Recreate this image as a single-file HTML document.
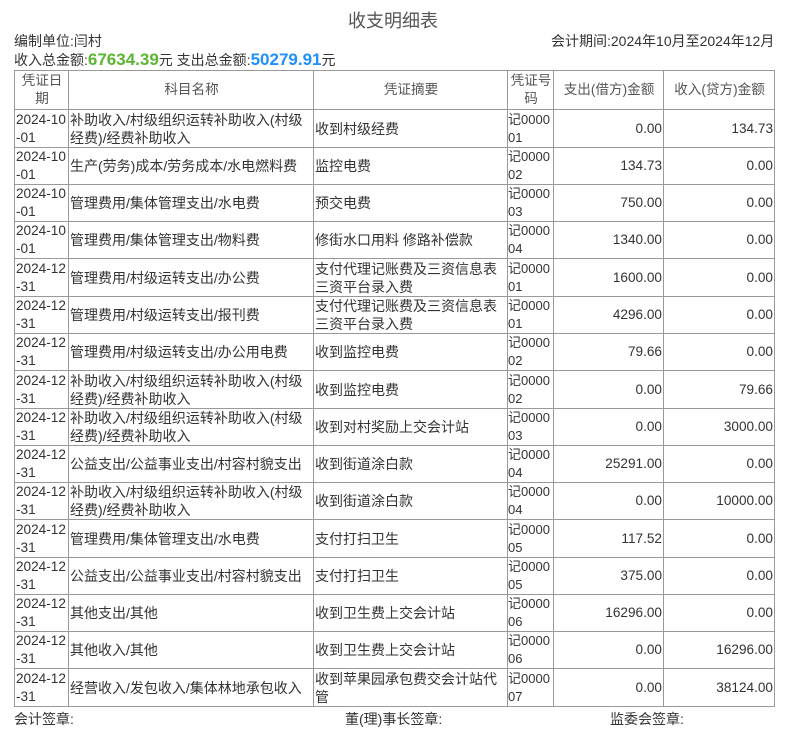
<!DOCTYPE html>
<html><head><meta charset="utf-8"><style>
body{margin:0;background:#fff;font-family:"Liberation Sans","Noto Sans CJK SC",sans-serif;color:#333;font-size:14px;}
.t{position:absolute;white-space:nowrap}
table{position:absolute;left:14px;top:70px;border-collapse:collapse;table-layout:fixed;width:761px;}
td,th{border:1px solid #999;padding:0 0 0 1px;font-weight:normal;line-height:18px;overflow:hidden;word-break:break-all;font-size:13.6px;color:#333}
th{text-align:center;color:#555}
td:nth-child(2),td:nth-child(3){font-size:14px}
td:nth-child(4){font-size:13px;padding:0}
td.r{text-align:right;padding-right:1px}
tr{height:37px}
tr.b{height:38px}
</style></head><body>
<div class="t" style="left:348px;top:7px;font-size:18px;color:#555">收支明细表</div>
<div class="t" style="left:14px;top:31px">编制单位:闫村</div>
<div class="t" style="left:551px;top:31px">会计期间:2024年10月至2024年12月</div>
<div class="t" style="left:14px;top:50px">收入总金额:<b style="color:#5cb531;font-size:17px">67634.39</b>元 支出总金额:<b style="color:#1e90ff;font-size:17px">50279.91</b>元</div>
<table>
<colgroup><col style="width:54px"><col style="width:245px"><col style="width:194px"><col style="width:46px"><col style="width:110px"><col style="width:111px"></colgroup>
<tr style="height:39px"><th>凭证日期</th><th>科目名称</th><th>凭证摘要</th><th>凭证号码</th><th>支出(借方)金额</th><th>收入(贷方)金额</th></tr>
<tr class="b"><td>2024-10-01</td><td>补助收入/村级组织运转补助收入(村级经费)/经费补助收入</td><td>收到村级经费</td><td>记000001</td><td class="r">0.00</td><td class="r">134.73</td></tr>
<tr><td>2024-10-01</td><td>生产(劳务)成本/劳务成本/水电燃料费</td><td>监控电费</td><td>记000002</td><td class="r">134.73</td><td class="r">0.00</td></tr>
<tr><td>2024-10-01</td><td>管理费用/集体管理支出/水电费</td><td>预交电费</td><td>记000003</td><td class="r">750.00</td><td class="r">0.00</td></tr>
<tr><td>2024-10-01</td><td>管理费用/集体管理支出/物料费</td><td>修街水口用料 修路补偿款</td><td>记000004</td><td class="r">1340.00</td><td class="r">0.00</td></tr>
<tr class="b"><td>2024-12-31</td><td>管理费用/村级运转支出/办公费</td><td>支付代理记账费及三资信息表三资平台录入费</td><td>记000001</td><td class="r">1600.00</td><td class="r">0.00</td></tr>
<tr><td>2024-12-31</td><td>管理费用/村级运转支出/报刊费</td><td>支付代理记账费及三资信息表三资平台录入费</td><td>记000001</td><td class="r">4296.00</td><td class="r">0.00</td></tr>
<tr><td>2024-12-31</td><td>管理费用/村级运转支出/办公用电费</td><td>收到监控电费</td><td>记000002</td><td class="r">79.66</td><td class="r">0.00</td></tr>
<tr class="b"><td>2024-12-31</td><td>补助收入/村级组织运转补助收入(村级经费)/经费补助收入</td><td>收到监控电费</td><td>记000002</td><td class="r">0.00</td><td class="r">79.66</td></tr>
<tr><td>2024-12-31</td><td>补助收入/村级组织运转补助收入(村级经费)/经费补助收入</td><td>收到对村奖励上交会计站</td><td>记000003</td><td class="r">0.00</td><td class="r">3000.00</td></tr>
<tr><td>2024-12-31</td><td>公益支出/公益事业支出/村容村貌支出</td><td>收到街道涂白款</td><td>记000004</td><td class="r">25291.00</td><td class="r">0.00</td></tr>
<tr><td>2024-12-31</td><td>补助收入/村级组织运转补助收入(村级经费)/经费补助收入</td><td>收到街道涂白款</td><td>记000004</td><td class="r">0.00</td><td class="r">10000.00</td></tr>
<tr class="b"><td>2024-12-31</td><td>管理费用/集体管理支出/水电费</td><td>支付打扫卫生</td><td>记000005</td><td class="r">117.52</td><td class="r">0.00</td></tr>
<tr><td>2024-12-31</td><td>公益支出/公益事业支出/村容村貌支出</td><td>支付打扫卫生</td><td>记000005</td><td class="r">375.00</td><td class="r">0.00</td></tr>
<tr><td>2024-12-31</td><td>其他支出/其他</td><td>收到卫生费上交会计站</td><td>记000006</td><td class="r">16296.00</td><td class="r">0.00</td></tr>
<tr><td>2024-12-31</td><td>其他收入/其他</td><td>收到卫生费上交会计站</td><td>记000006</td><td class="r">0.00</td><td class="r">16296.00</td></tr>
<tr class="b"><td>2024-12-31</td><td>经营收入/发包收入/集体林地承包收入</td><td>收到苹果园承包费交会计站代管</td><td>记000007</td><td class="r">0.00</td><td class="r">38124.00</td></tr>
</table>
<div class="t" style="left:14px;top:709px">会计签章:</div>
<div class="t" style="left:345px;top:709px">董(理)事长签章:</div>
<div class="t" style="left:610px;top:709px">监委会签章:</div>
</body></html>
